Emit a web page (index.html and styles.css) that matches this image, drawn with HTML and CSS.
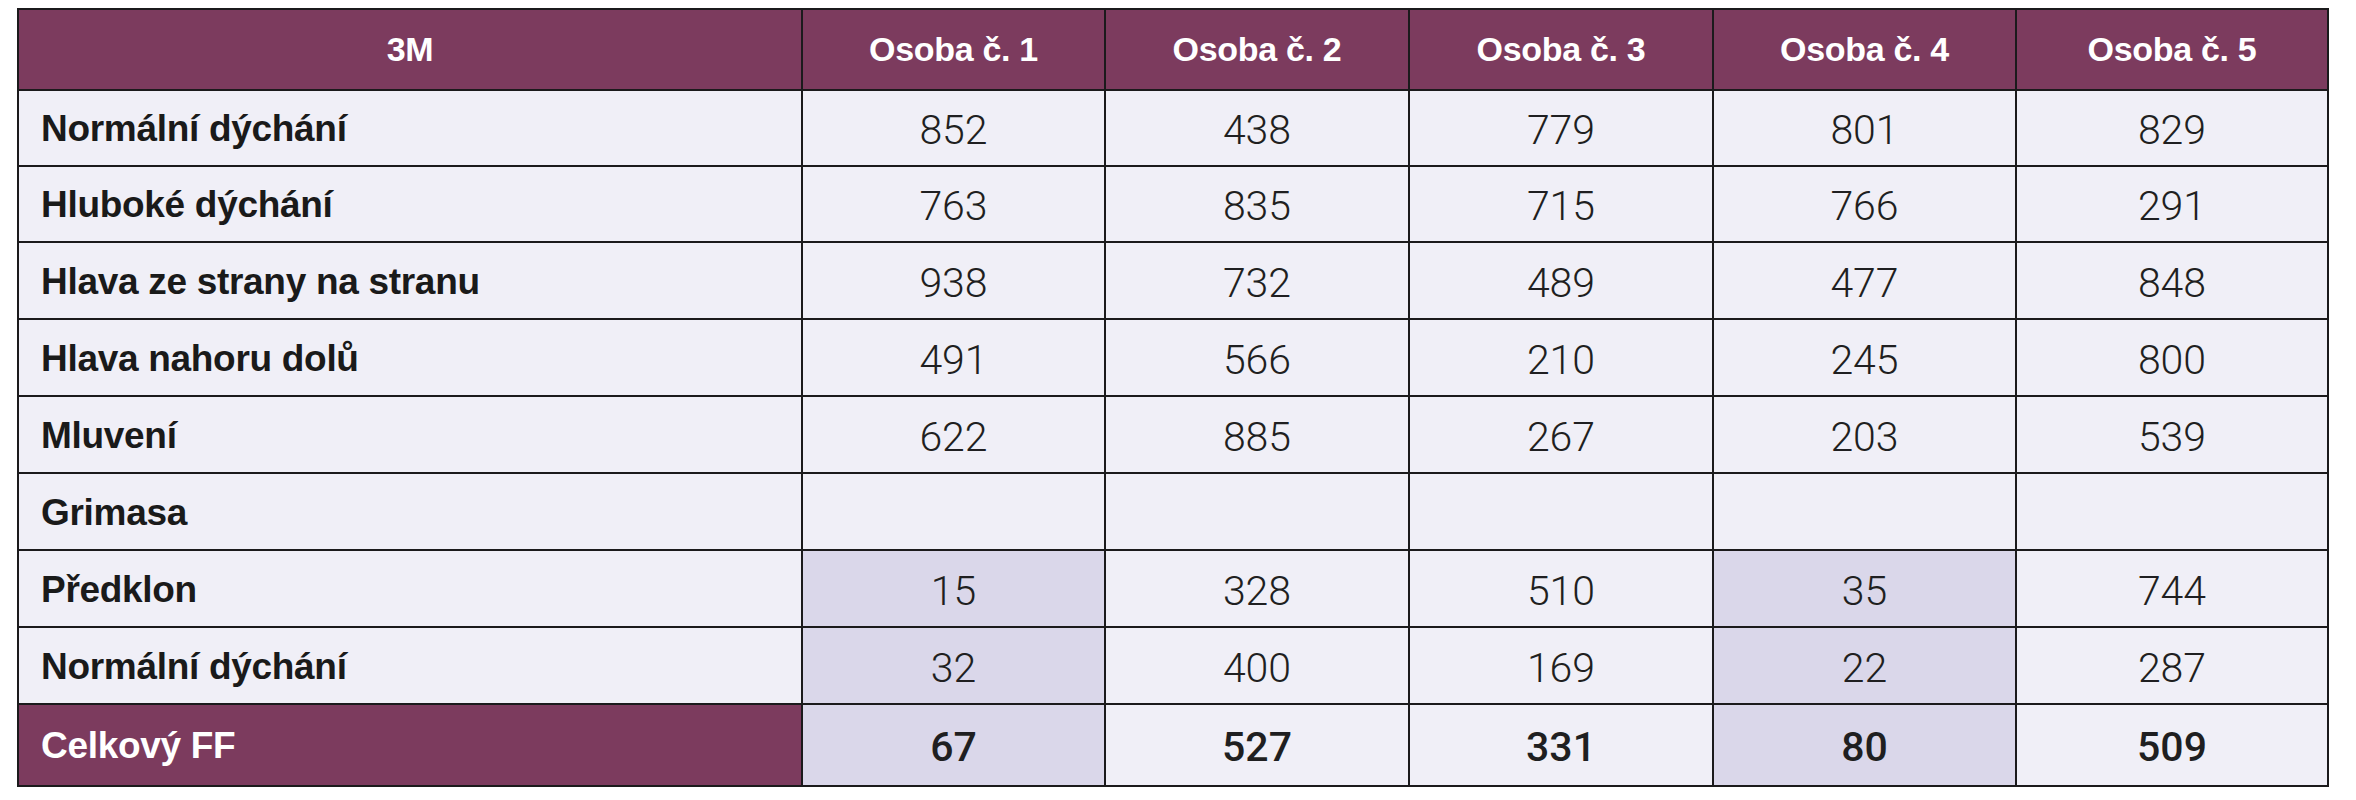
FILE: index.html
```html
<!DOCTYPE html>
<html lang="cs">
<head>
<meta charset="utf-8">
<title>3M – výsledky</title>
<link rel="stylesheet" href="styles.css">
</head>
<body>
<table class="results">
  <colgroup>
    <col class="col-label">
    <col class="col-a">
    <col class="col-b">
    <col class="col-b">
    <col class="col-a">
    <col class="col-last">
  </colgroup>
  <thead>
    <tr class="head-row">
      <th>3M</th>
      <th>Osoba č. 1</th>
      <th>Osoba č. 2</th>
      <th>Osoba č. 3</th>
      <th>Osoba č. 4</th>
      <th>Osoba č. 5</th>
    </tr>
  </thead>
  <tbody>
    <tr class="row row-short">
      <th class="label">Normální dýchání</th>
      <td>852</td><td>438</td><td>779</td><td>801</td><td>829</td>
    </tr>
    <tr class="row row-short">
      <th class="label">Hluboké dýchání</th>
      <td>763</td><td>835</td><td>715</td><td>766</td><td>291</td>
    </tr>
    <tr class="row">
      <th class="label">Hlava ze strany na stranu</th>
      <td>938</td><td>732</td><td>489</td><td>477</td><td>848</td>
    </tr>
    <tr class="row">
      <th class="label">Hlava nahoru dolů</th>
      <td>491</td><td>566</td><td>210</td><td>245</td><td>800</td>
    </tr>
    <tr class="row">
      <th class="label">Mluvení</th>
      <td>622</td><td>885</td><td>267</td><td>203</td><td>539</td>
    </tr>
    <tr class="row">
      <th class="label">Grimasa</th>
      <td></td><td></td><td></td><td></td><td></td>
    </tr>
    <tr class="row">
      <th class="label">Předklon</th>
      <td class="mark">15</td><td>328</td><td>510</td><td class="mark">35</td><td>744</td>
    </tr>
    <tr class="row">
      <th class="label">Normální dýchání</th>
      <td class="mark">32</td><td>400</td><td>169</td><td class="mark">22</td><td>287</td>
    </tr>
  </tbody>
  <tfoot>
    <tr class="total-row">
      <th class="label">Celkový FF</th>
      <td class="mark">67</td><td>527</td><td>331</td><td class="mark">80</td><td>509</td>
    </tr>
  </tfoot>
</table>
</body>
</html>
```

FILE: styles.css
```css
html, body {
  background: #ffffff;
}

body {
  margin: 8px 0 0 17px;
  font-family: "Liberation Sans", Arial, sans-serif;
}

.results {
  border-collapse: collapse;
  table-layout: fixed;
  width: 2310px;
  background: #f0eff7;
  color: #1d1d1f;
}

.col-label { width: 784px; }
.col-a { width: 303px; }
.col-b { width: 304px; }
.col-last { width: 312px; }

.results th,
.results td {
  border: 2px solid #1b1a1c;
  padding: 0;
  vertical-align: middle;
}

.head-row {
  height: 81px;
}

.results .head-row th {
  background: #7c3b5e;
  color: #ffffff;
  font-family: "Liberation Sans", Arial, sans-serif;
  font-weight: 700;
  font-size: 34px;
  text-align: center;
  letter-spacing: -0.3px;
}

.row {
  height: 77px;
}

.row-short {
  height: 76px;
}

.results .label {
  text-align: left;
  padding: 2px 0 0 22px;
  font-family: "Liberation Sans", Arial, sans-serif;
  font-weight: 700;
  font-size: 37px;
  color: #1a1a1a;
  letter-spacing: -0.3px;
}

.results td {
  text-align: center;
  font-family: Roboto, "Liberation Sans", sans-serif;
  font-weight: 300;
  font-size: 41px;
  color: #1f1f21;
  padding-top: 4px;
}

.results td.mark {
  background: #dad7ea;
}

.total-row {
  height: 82px;
}

.results .total-row .label {
  background: #7c3b5e;
  color: #ffffff;
}

.results .total-row td {
  font-weight: 500;
}
```
